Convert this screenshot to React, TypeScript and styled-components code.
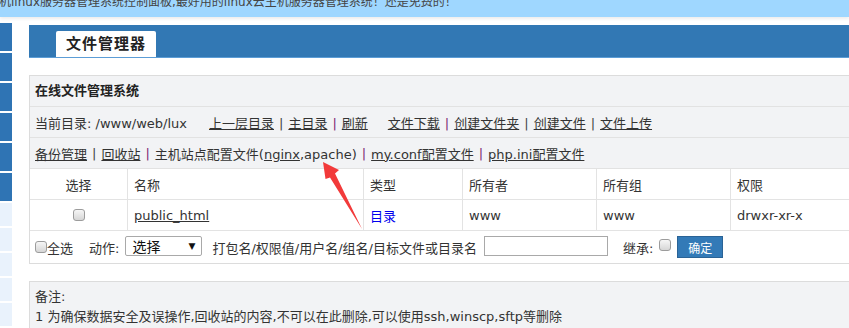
import styled, { createGlobalStyle } from "styled-components";

const GlobalStyle = createGlobalStyle`
  html, body {
    margin: 0;
    padding: 0;
    background: #ffffff;
    overflow: hidden;
  }
  body {
    font-family: "DejaVu Sans", "Noto Sans CJK SC", sans-serif;
    font-size: 13px;
    color: #333333;
  }
`;

export default function App() {
  return (
    <>
      <GlobalStyle />
      <TopBar>
        <TopText>
          主机linux服务器管理系统控制面板,最好用的linux云主机服务器管理系统！还是免费的！
        </TopText>
      </TopBar>
      <Page>
        <Sidebar>
          {[0, 1, 2, 3, 4, 5].map((i) => (
            <SideItem key={"b" + i} />
          ))}
          {[0, 1, 2, 3, 4].map((i) => (
            <SideItem key={"l" + i} $light />
          ))}
        </Sidebar>
        <Main>
          <Header>
            <Tab>文件管理器</Tab>
          </Header>

          <Panel>
            <TitleRow>在线文件管理系统</TitleRow>
            <BarRow>
              <span>当前目录: /www/web/lux</span>
              <Group $gap={22}>
                <Link>上一层目录</Link>
                <Sep>|</Sep>
                <Link>主目录</Link>
                <Sep $purple>|</Sep>
                <Link>刷新</Link>
              </Group>
              <Group $gap={20}>
                <Link>文件下载</Link>
                <Sep $purple>|</Sep>
                <Link>创建文件夹</Link>
                <Sep>|</Sep>
                <Link>创建文件</Link>
                <Sep>|</Sep>
                <Link>文件上传</Link>
              </Group>
            </BarRow>
            <BarRow>
              <Link>备份管理</Link>
              <Sep>|</Sep>
              <Link>回收站</Link>
              <Sep $purple>|</Sep>
              <span>
                主机站点配置文件(<Link>nginx</Link>,apache)
              </span>
              <Sep $purple>|</Sep>
              <Link>my.conf配置文件</Link>
              <Sep $purple>|</Sep>
              <Link>php.ini配置文件</Link>
            </BarRow>

            <FileGrid>
              <Cell $center>选择</Cell>
              <Cell>名称</Cell>
              <Cell>类型</Cell>
              <Cell>所有者</Cell>
              <Cell>所有组</Cell>
              <Cell $last>权限</Cell>

              <Cell $center>
                <Check />
              </Cell>
              <Cell>
                <Link>public_html</Link>
              </Cell>
              <Cell>
                <DirType>目录</DirType>
              </Cell>
              <Cell>www</Cell>
              <Cell>www</Cell>
              <Cell $last>drwxr-xr-x</Cell>
            </FileGrid>

            <ActionRow>
              <Check />
              <span>全选</span>
              <Label $gap={16}>动作:</Label>
              <FakeSelect>
                <span>选择</span>
                <Caret>▼</Caret>
              </FakeSelect>
              <Label $gap={10}>打包名/权限值/用户名/组名/目标文件或目录名</Label>
              <TextBox />
              <Label $gap={15}>继承:</Label>
              <Check $up />
              <OkButton>确定</OkButton>
            </ActionRow>
          </Panel>

          <NotePanel>
            <div>备注:</div>
            <div>1 为确保数据安全及误操作,回收站的内容,不可以在此删除,可以使用ssh,winscp,sftp等删除</div>
          </NotePanel>
        </Main>
      </Page>

      <Arrow width="849" height="328" viewBox="0 0 849 328">
        <polygon
          points="323,162 339,170 335,173.5 362,229 330,177.5 325.5,179"
          fill="#f23a3a"
        />
      </Arrow>
    </>
  );
}

const TopBar = styled.div`
  height: 17px;
  overflow: hidden;
  background-color: #9fd7ff;
  box-shadow: 0 2px 3px rgba(0, 0, 0, 0.07);
`;

const TopText = styled.div`
  margin-top: -4px;
  margin-left: -13px;

  white-space: nowrap;
  line-height: 13px;
  font-size: 12px;
  color: #444444;
`;

const Page = styled.div`
  display: flex;
  align-items: flex-start;
`;

const Sidebar = styled.div`
  display: flex;
  flex-direction: column;
  gap: 2px;

  width: 12px;
  padding-top: 6px;
`;

const SideItem = styled.div<{ $light?: boolean }>`
  height: ${(p) => (p.$light ? "23px" : "28px")};
  background-color: ${(p) => (p.$light ? "#e9f2fc" : "#2f74b4")};
`;

const Main = styled.div`
  flex: 1;
  min-width: 0;

  margin-left: 17px;
  margin-right: -2px;
  padding-top: 8px;
`;

const Header = styled.div`
  display: flex;
  align-items: flex-end;

  height: 32px;
  padding-left: 27px;

  background-color: #3278b4;
  border-bottom: 1px solid #5c9dd6;
`;

const Tab = styled.div`
  height: 26px;
  padding: 0 10px;

  line-height: 27px;
  font-size: 15px;
  font-weight: bold;
  letter-spacing: 1px;
  color: #222222;

  background-color: #ffffff;
  border-radius: 2px 2px 0 0;
`;

const Panel = styled.div`
  margin-top: 17px;

  background-color: #ffffff;
  border: 1px solid #dcdcdc;
`;

const TitleRow = styled.div`
  height: 30px;
  padding-left: 5px;

  line-height: 30px;
  font-weight: bold;
  color: #222222;

  background-color: #f2f3f5;
  border-bottom: 1px solid #e2e2e2;
`;

const BarRow = styled.div`
  display: flex;
  align-items: center;

  height: 30px;
  padding-left: 5px;

  white-space: nowrap;
  background-color: #f2f3f5;
  border-bottom: 1px solid #e2e2e2;
`;

const Group = styled.span<{ $gap: number }>`
  margin-left: ${(p) => p.$gap}px;
`;

const Link = styled.a`
  color: #333333;
  text-decoration: underline;
  cursor: pointer;
`;

const Sep = styled.span<{ $purple?: boolean }>`
  padding: 0 5px;
  color: ${(p) => (p.$purple ? "#7d2a72" : "#444444")};
`;

const FileGrid = styled.div`
  display: grid;
  grid-template-columns: 98px 236px 99px 134px 134px 1fr;
  grid-auto-rows: 31px;
`;

const Cell = styled.div<{ $center?: boolean; $last?: boolean }>`
  display: flex;
  align-items: center;
  justify-content: ${(p) => (p.$center ? "center" : "flex-start")};

  padding-left: ${(p) => (p.$center ? "0" : "6px")};

  border-right: ${(p) => (p.$last ? "none" : "1px solid #e3e3e3")};
  border-bottom: 1px solid #e3e3e3;
`;

const DirType = styled.span`
  color: #0000ee;
`;

const Check = styled.span<{ $up?: boolean }>`
  display: inline-block;
  box-sizing: border-box;
  width: 12px;
  height: 12px;
  margin-top: ${(p) => (p.$up ? "-5px" : "0")};
  margin-left: ${(p) => (p.$up ? "6px" : "0")};

  border: 1px solid #9c9c9c;
  border-radius: 3px;
  background: linear-gradient(#f6f6f6, #d6d6d6);
`;

const ActionRow = styled.div`
  display: flex;
  align-items: center;

  height: 32px;
  padding-left: 5px;

  white-space: nowrap;
`;

const Label = styled.span<{ $gap: number }>`
  margin-left: ${(p) => p.$gap}px;
`;

const FakeSelect = styled.div`
  display: flex;
  align-items: center;
  justify-content: space-between;
  box-sizing: border-box;

  width: 77px;
  height: 20px;
  margin-left: 6px;
  margin-top: -3px;
  padding: 0 6px 0 6px;

  font-size: 14px;
  color: #111111;

  background-color: #ffffff;
  border: 1px solid #a9a9a9;
  border-radius: 2px;
`;

const Caret = styled.span`
  font-size: 9px;
  color: #111111;
`;

const TextBox = styled.input`
  box-sizing: border-box;
  width: 124px;
  height: 20px;
  margin-left: 7px;
  margin-top: -3px;

  border: 1px solid #a9a9a9;
  outline: none;
`;

const OkButton = styled.button`
  box-sizing: border-box;
  width: 46px;
  height: 22px;
  margin-left: 6px;
  padding: 0;

  font-family: "Noto Sans CJK SC", sans-serif;
  font-size: 12px;
  color: #ffffff;

  background-color: #337ab7;
  border: 1px solid #2a6396;
  cursor: pointer;
`;

const NotePanel = styled.div`
  margin-top: 17px;
  height: 60px;
  padding: 5px 0 0 5px;

  line-height: 20px;

  background-color: #f2f3f5;
  border: 1px solid #dcdcdc;
`;

const Arrow = styled.svg`
  position: absolute;
  left: 0;
  top: 0;
  pointer-events: none;
`;
